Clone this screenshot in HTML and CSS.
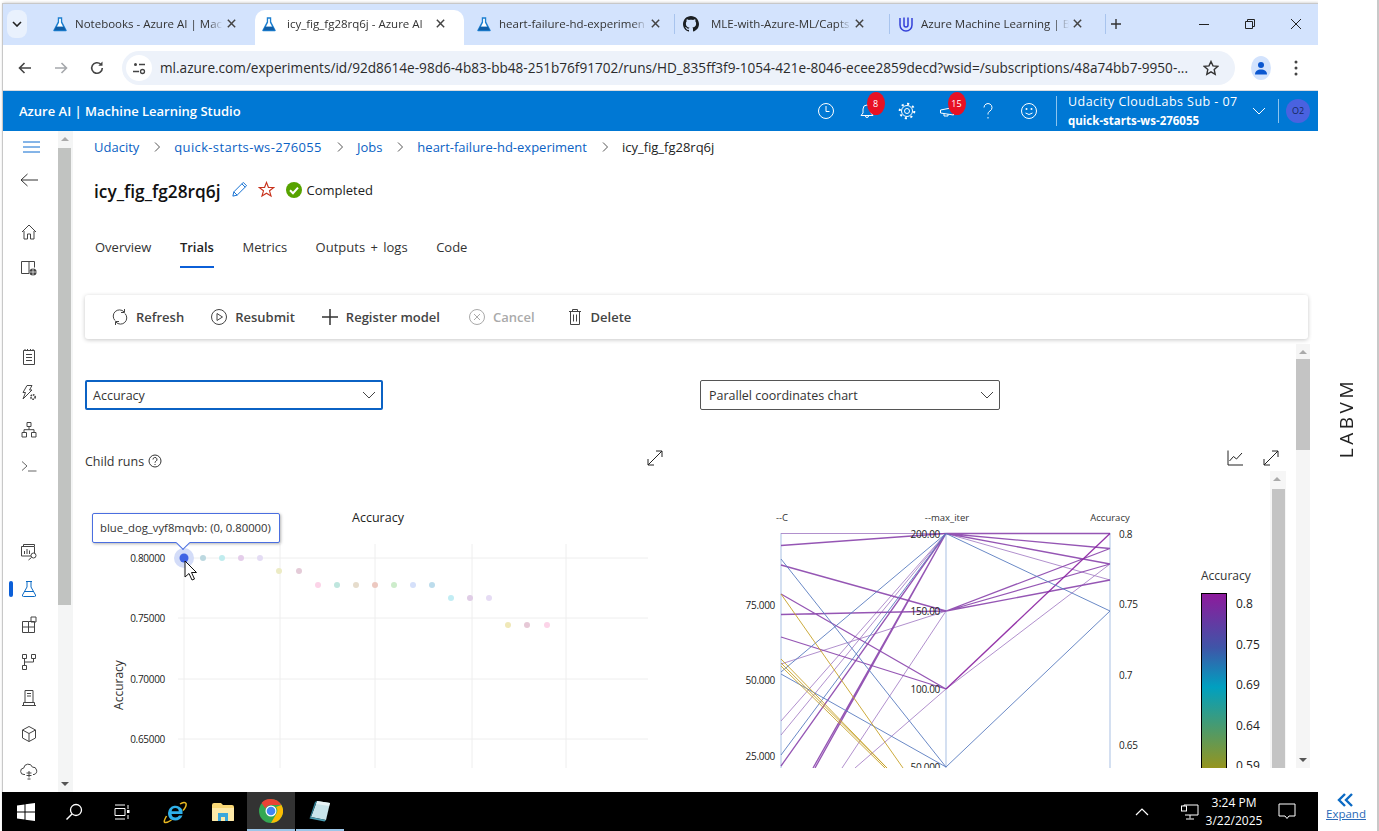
FILE: index.html
```html
<!DOCTYPE html>
<html lang="en">
<head>
  <meta charset="UTF-8" />
  <title>icy_fig_fg28rq6j - Azure AI</title>
  <link rel="stylesheet" href="styles.css">
</head>
<body>
  <svg class="defs" width="0" height="0">
    <symbol id="flask" viewBox="0 0 18 18">
      <path d="M6.5 1.5h5v5l5 9.5q.4 1.2-1 1.2H2.500q-1.400 0-1-1.200l5-9.500z" fill="#1c7fd0"/>
      <path d="M8 3h2v4.200L12.500 12h-7L8 7.200z" fill="#fff"/>
      <path d="M4.500 12h9l2 4h-13z" fill="#0f5ea8"/>
    </symbol>
    <symbol id="close" viewBox="0 0 12 12"><path d="M2 2l8 8M10 2l-8 8" stroke="#444" stroke-width="1.600" fill="none"/></symbol>
    <symbol id="chev" viewBox="0 0 12 12"><path d="M4 1.500L8.500 6 4 10.500" stroke="#555" fill="none"/></symbol>
    <symbol id="expand" viewBox="0 0 18 18"><path d="M2 16L16 2M10 2h6v6M2 10v6h6" stroke="#222" fill="none"/></symbol>
  </svg>

  <div class="desktop">
    <div class="tabstrip">
      <div class="tab-menu"><svg width="10" height="6" viewBox="0 0 10 6"><path d="M1 1l4 4 4-4" stroke="#222" stroke-width="1.600" fill="none"/></svg></div>
      <div class="tab"><svg class="favicon"><use href="#flask"/></svg><span class="tab-title">Notebooks - Azure AI | Mac</span><svg class="tab-x"><use href="#close"/></svg></div>
      <div class="tab active"><svg class="favicon"><use href="#flask"/></svg><span class="tab-title">icy_fig_fg28rq6j - Azure AI</span><svg class="tab-x"><use href="#close"/></svg></div>
      <div class="tab tab-gap"><svg class="favicon"><use href="#flask"/></svg><span class="tab-title">heart-failure-hd-experimen</span><svg class="tab-x"><use href="#close"/></svg></div>
      <div class="tab tab-back sep-left">
        <svg class="favicon" viewBox="0 0 16 16"><path fill="#1b1f23" d="M8 0C3.600 0 0 3.600 0 8c0 3.500 2.300 6.500 5.500 7.600.4.100.5-.2.500-.4v-1.400c-2.200.5-2.700-1.100-2.700-1.100-.4-.9-.9-1.200-.9-1.200-.7-.5.100-.5.100-.5.800.1 1.200.8 1.200.8.700 1.200 1.900.9 2.300.7.100-.5.300-.9.500-1.100-1.800-.2-3.600-.9-3.600-4 0-.9.300-1.600.8-2.100-.1-.2-.4-1 .1-2.100 0 0 .7-.2 2.200.8.600-.2 1.300-.3 2-.3s1.400.1 2 .3c1.500-1 2.200-.8 2.200-.8.400 1.100.2 1.900.1 2.100.5.600.8 1.300.8 2.100 0 3.100-1.900 3.700-3.700 3.900.3.300.6.800.6 1.500v2.200c0 .2.100.5.600.4C13.700 14.500 16 11.500 16 8c0-4.400-3.600-8-8-8z"/></svg>
        <span class="tab-title">MLE-with-Azure-ML/Capts</span><svg class="tab-x"><use href="#close"/></svg>
      </div>
      <div class="tab tab-gap sep-left sep-right">
        <svg class="favicon" viewBox="0 0 16 16"><path d="M2 2v7a6 6 0 0 0 12 0V2M6 1.500v7.500a2 2 0 0 0 4 0V1.500" stroke="#3340d8" stroke-width="1.500" fill="none"/></svg>
        <span class="tab-title">Azure Machine Learning | B</span><svg class="tab-x"><use href="#close"/></svg>
      </div>
      <div class="tab-plus"><svg width="12" height="12" viewBox="0 0 12 12"><path d="M6 1v10M1 6h10" stroke="#333" stroke-width="1.400"/></svg></div>
      <div class="window-btns">
        <svg width="12" height="12" viewBox="0 0 12 12"><path d="M1 6.500h10" stroke="#222"/></svg>
        <svg width="12" height="12" viewBox="0 0 12 12"><path d="M1.500 3.500h7v7h-7zM3.500 3.500v-2h7v7h-2" stroke="#222" fill="none"/></svg>
        <svg width="12" height="12" viewBox="0 0 12 12"><path d="M1 1l10 10M11 1L1 11" stroke="#222"/></svg>
      </div>
    </div>

    <div class="toolbar">
      <svg class="tool" viewBox="0 0 16 16"><path d="M14 8H2.500M7.500 3l-5 5 5 5" stroke="#444" stroke-width="1.600" fill="none"/></svg>
      <svg class="tool" viewBox="0 0 16 16"><path d="M2 8h11.500M8.500 3l5 5-5 5" stroke="#a5a8ac" stroke-width="1.600" fill="none"/></svg>
      <svg class="tool" viewBox="0 0 16 16"><path d="M13.300 8a5.300 5.300 0 1 1-1.600-3.800" stroke="#444" stroke-width="1.600" fill="none"/><path d="M13.500 1.500v4.200H9.300z" fill="#444"/></svg>
      <div class="omnibox">
        <span class="tune"><svg width="14" height="14" viewBox="0 0 14 14"><circle cx="3.500" cy="3.500" r="1.500" fill="#444"/><path d="M7 3.500h6M1 10.500h6" stroke="#444" stroke-width="1.300"/><circle cx="10.500" cy="10.500" r="2" stroke="#444" stroke-width="1.300" fill="none"/></svg></span>
        <span class="url">ml.azure.com/experiments/id/92d8614e-98d6-4b83-bb48-251b76f91702/runs/HD_835ff3f9-1054-421e-8046-ecee2859decd?wsid=/subscriptions/48a74bb7-9950-...</span>
        <svg class="star" viewBox="0 0 16 16"><path d="M8 1.500l2 4.400 4.700.5-3.500 3.200 1 4.700L8 11.900l-4.200 2.400 1-4.700L1.300 6.400 6 5.900z" stroke="#333" stroke-width="1.400" fill="none"/></svg>
      </div>
      <span class="profile"><svg width="14" height="14" viewBox="0 0 14 14"><circle cx="7" cy="4" r="3" fill="#0b57d0"/><path d="M1 13.500c0-3.500 2.500-5 6-5s6 1.500 6 5z" fill="#0b57d0"/></svg></span>
      <svg class="dots" width="4" height="16" viewBox="0 0 4 16"><circle cx="2" cy="2" r="1.500" fill="#444"/><circle cx="2" cy="8" r="1.500" fill="#444"/><circle cx="2" cy="14" r="1.500" fill="#444"/></svg>
    </div>

    <header class="appbar">
      <div class="app-title">Azure AI | Machine Learning Studio</div>
      <div class="app-icons">
        <svg class="app-icon" viewBox="0 0 18 18"><circle cx="9" cy="9" r="7.500" stroke="#fff" fill="none"/><path d="M9 4v5.500h3.500" stroke="#fff" fill="none"/></svg>
        <span class="app-icon-wrap"><svg class="app-icon" viewBox="0 0 18 18"><path d="M3 13.500h12l-2-2.500V7a4 4 0 0 0-8 0v4zM7.500 14a1.500 1.500 0 0 0 3 0" stroke="#fff" fill="none"/></svg><span class="badge">8</span></span>
        <svg class="app-icon" viewBox="0 0 18 18"><circle cx="9" cy="9" r="2.500" stroke="#fff" fill="none"/><circle cx="9" cy="9" r="5.500" stroke="#fff" fill="none"/><circle cx="9" cy="9" r="7.300" stroke="#fff" stroke-width="2" stroke-dasharray="2.200 3.500" fill="none"/></svg>
        <span class="app-icon-wrap"><svg class="app-icon" viewBox="0 0 18 18"><path d="M1.500 8v3l13 2V5.500zM5 11.500v2.500h4v-1.800" stroke="#fff" fill="none"/></svg><span class="badge">15</span></span>
        <svg class="app-icon" viewBox="0 0 18 18"><path d="M5 5.500a4 4 0 1 1 6 3.500c-1.500.9-2 1.700-2 3.500M9 15v1.500" stroke="#fff" fill="none"/></svg>
        <svg class="app-icon" viewBox="0 0 18 18"><circle cx="9" cy="9" r="7.500" stroke="#fff" fill="none"/><circle cx="6.500" cy="7" r="1" fill="#fff"/><circle cx="11.500" cy="7" r="1" fill="#fff"/><path d="M5.500 11q3.500 3 7 0" stroke="#fff" fill="none"/></svg>
      </div>
      <div class="account">
        <div class="account-sub">Udacity CloudLabs Sub - 07</div>
        <div class="account-ws">quick-starts-ws-276055</div>
      </div>
      <svg class="account-chev" width="14" height="8" viewBox="0 0 14 8"><path d="M1 1l6 6 6-6" stroke="#fff" fill="none"/></svg>
      <div class="avatar-box"><span class="avatar">O2</span></div>
    </header>

    <div class="studio">
      <nav class="sidenav">
        <svg class="nav-burger" width="17" height="12" viewBox="0 0 17 12"><path d="M0 1h17M0 6h17M0 11h17" stroke="#0b6ad0"/></svg>
        <svg class="nav-back" width="18" height="14" viewBox="0 0 18 14"><path d="M18 7H1M7.500 1L1 7l6.500 6" stroke="#333" fill="none"/></svg>
        <svg class="nav-icon" viewBox="0 0 18 18"><path d="M2 9l7-7 7 7M4 8v8h3.500v-5h3v5H14V8" stroke="#444" fill="none"/></svg>
        <svg class="nav-icon" viewBox="0 0 18 18"><path d="M9 14.500H1.500v-12h13v6M9 2.500v12" stroke="#444" fill="none"/><circle cx="13" cy="13" r="3.600" fill="#444"/><path d="M9.500 13h7M13 9.500v7" stroke="#fff" stroke-width=".7"/></svg>
        <div class="nav-gap-1"></div>
        <svg class="nav-icon" viewBox="0 0 18 18"><path d="M3.500 2.500h11v14h-11zM6 6.500h6M6 9.500h6M6 12.500h6M5 1v2M7.500 1v2M10.500 1v2M13 1v2" stroke="#444" fill="none"/></svg>
        <svg class="nav-icon" viewBox="0 0 18 18"><path d="M7 1.500h5L9.500 6H12L3 15l2.500-6.500H3z" stroke="#444" fill="none"/><circle cx="13" cy="13" r="2.200" stroke="#444" stroke-dasharray="1.500 .8" stroke-width="1.600" fill="none"/></svg>
        <svg class="nav-icon" viewBox="0 0 18 18"><path d="M7 1.500h4v4H7zM2 11.500h4.500V16H2zM11.500 11.500H16V16h-4.500zM9 5.500v3.200M4 11.500V8.700h10v2.800" stroke="#444" fill="none"/></svg>
        <svg class="nav-icon" viewBox="0 0 18 18"><path d="M2 4.500L7 9l-5 4.500" stroke="#666" fill="none"/><path d="M8 14h8.500" stroke="#999" stroke-width="1.500"/></svg>
        <div class="nav-gap-2"></div>
        <svg class="nav-icon" viewBox="0 0 18 18"><path d="M3.500 3V1.500h11V3M1.500 3.500h13V13h-13zM4.500 11V8M7 11V6M9.500 11V7.500" stroke="#444" fill="none"/><circle cx="13.500" cy="12.500" r="2.500" fill="#fff" stroke="#444"/><path d="M11.500 14.500L8.500 17" stroke="#444"/></svg>
        <div class="nav-active">
          <svg class="nav-icon" viewBox="0 0 18 18"><path d="M6 1.500h6M7 1.500v5.500L2.500 15q-.5 1.500 1 1.500h11q1.500 0 1-1.500L11 7V1.500M4.500 11.500h9" stroke="#0b6ac4" fill="none"/></svg>
        </div>
        <svg class="nav-icon" viewBox="0 0 18 18"><path d="M2.500 5.500h6v11h-6zM2.500 11h12v5.500h-6M8.500 5.500h6V11M11 1h5v5h-5z" stroke="#444" fill="none"/></svg>
        <svg class="nav-icon" viewBox="0 0 18 18"><path d="M2.500 1.500h4v4h-4zM11.500 1.500h4v4h-4zM2.500 12.500h4v4h-4zM4.500 5.500v7M13.500 5.500V9h-9" stroke="#444" fill="none"/></svg>
        <svg class="nav-icon" viewBox="0 0 18 18"><path d="M5 1.500h8v12H5zM7 4.500h4M7 7h4M2 16.500h14M3.500 16.500v-3H5M14.500 16.500v-3H13" stroke="#444" fill="none"/></svg>
        <svg class="nav-icon" viewBox="0 0 18 18"><path d="M9 1.500l6.500 3.500v8L9 16.500 2.500 13V5zM2.500 5L9 8.500 15.500 5M9 8.500v8" stroke="#444" fill="none"/></svg>
        <svg class="nav-icon" viewBox="0 0 18 18"><path d="M5 12.500H4a3.200 3.200 0 0 1-.3-6.400 4.500 4.500 0 0 1 8.700-1 3.800 3.800 0 0 1 1.600 7.400H13M6.500 11h5M6.500 13.500h5M9 9v6.500M7.500 17h3" stroke="#444" fill="none"/></svg>
      </nav>
      <div class="page-scroll">
        <span class="arrow-up"></span>
        <div class="page-thumb"></div>
        <span class="arrow-down"></span>
      </div>

      <main class="content">
        <div class="crumbs">
          <a>Udacity</a><svg class="crumb-sep"><use href="#chev"/></svg>
          <a class="crumb-wide">quick-starts-ws-276055</a><svg class="crumb-sep"><use href="#chev"/></svg>
          <a>Jobs</a><svg class="crumb-sep"><use href="#chev"/></svg>
          <a>heart-failure-hd-experiment</a><svg class="crumb-sep"><use href="#chev"/></svg>
          <span>icy_fig_fg28rq6j</span>
        </div>
        <div class="run-head">
          <h1>icy_fig_fg28rq6j</h1>
          <svg class="pencil" viewBox="0 0 18 18"><path d="M2 16l1-4.500L13 1.500l3.500 3.500L6.500 15zM3 11.500L6.500 15M11.500 3l3.500 3.500" stroke="#0b6ad0" fill="none"/></svg>
          <svg class="fav" viewBox="0 0 18 18"><path d="M9 1.500l2 5.200 5.700.2-4.500 3.500 1.600 5.500L9 13l-4.800 2.900 1.600-5.500-4.500-3.500 5.700-.2z" stroke="#c8321c" stroke-width="1.200" fill="none"/></svg>
          <svg class="status" viewBox="0 0 16 16"><circle cx="8" cy="8" r="8" fill="#57a300"/><path d="M4 8.200l3 3 5-5.500" stroke="#fff" stroke-width="2" fill="none"/></svg>
          <span class="status-text">Completed</span>
        </div>
        <div class="tabs">
          <span>Overview</span>
          <span class="tab-on">Trials</span>
          <span>Metrics</span>
          <span>Outputs + logs</span>
          <span>Code</span>
        </div>
        <div class="commands">
          <span class="cmd"><svg viewBox="0 0 18 18"><path d="M4 12.500A6 6 0 0 1 13 3.800M14 5.500a6 6 0 0 1-9 8.700" stroke="#444" fill="none"/><path d="M13.500 1v3.500H10M4.500 17v-3.500H8" stroke="#444" fill="none"/></svg>Refresh</span>
          <span class="cmd"><svg viewBox="0 0 18 18"><circle cx="9" cy="9" r="7.500" stroke="#444" fill="none"/><path d="M7 5.500l5.500 3.500L7 12.500z" stroke="#444" fill="none"/></svg>Resubmit</span>
          <span class="cmd"><svg viewBox="0 0 18 18"><path d="M9 1v16M1 9h16" stroke="#333" stroke-width="1.500"/></svg>Register model</span>
          <span class="cmd off"><svg viewBox="0 0 18 18"><circle cx="9" cy="9" r="7.500" stroke="#aaa" fill="none"/><path d="M6 6l6 6M12 6l-6 6" stroke="#aaa"/></svg>Cancel</span>
          <span class="cmd"><svg viewBox="0 0 18 18"><path d="M3 3.500h12M6.500 3.500V1.500h5v2M4.500 3.500v13h9v-13M7.500 6.500v7M10.500 6.500v7" stroke="#444" fill="none"/></svg>Delete</span>
        </div>

        <div class="scroll-area">
          <div class="scroll-content">
            <div class="selects">
              <div class="select focused">Accuracy<svg width="14" height="8" viewBox="0 0 14 8"><path d="M1 1l6 6 6-6" stroke="#444" fill="none"/></svg></div>
              <div class="select">Parallel coordinates chart<svg width="14" height="8" viewBox="0 0 14 8"><path d="M1 1l6 6 6-6" stroke="#444" fill="none"/></svg></div>
            </div>
            <div class="panels">
              <section class="panel-left">
                <div class="panel-head">
                  <span class="child-runs">Child runs <svg width="14" height="14" viewBox="0 0 14 14"><circle cx="7" cy="7" r="6" stroke="#333" fill="none"/><path d="M5 5.500a2 2 0 1 1 3 1.700c-.7.400-1 .8-1 1.500M7 10v1" stroke="#333" fill="none"/></svg></span>
                  <svg class="head-icon"><use href="#expand"/></svg>
                </div>
                <div class="chart-wrap">
                  <div class="tooltip">blue_dog_vyf8mqvb: (0, 0.80000)</div>
                  <svg class="chart" width="580" height="297" viewBox="85 471 580 297">
                    <g stroke="#eee">
                      <path d="M184 544v224M280 544v224M375 544v224M472 544v224M566 544v224"/>
                      <path d="M178 558h470M178 618h470M178 679h470M178 739h470"/>
                    </g>
                    <text class="title" x="378" y="522" text-anchor="middle">Accuracy</text>
                    <g class="ticks" text-anchor="end">
                      <text x="165" y="562">0.80000</text>
                      <text x="165" y="622">0.75000</text>
                      <text x="165" y="683">0.70000</text>
                      <text x="165" y="743">0.65000</text>
                    </g>
                    <text class="ylabel" transform="translate(123 685) rotate(-90)" text-anchor="middle">Accuracy</text>
                    <circle cx="184" cy="558" r="10" fill="#d3dcf8"/>
                    <g class="dots-faint">
                      <circle cx="203" cy="558" r="3" fill="#bcd8e0"/>
                      <circle cx="222" cy="558" r="3" fill="#c0ecee"/>
                      <circle cx="241" cy="558" r="3" fill="#e4cdea"/>
                      <circle cx="260" cy="558" r="3" fill="#e4dcf4"/>
                      <circle cx="279" cy="571" r="3" fill="#ecebc4"/>
                      <circle cx="299" cy="571" r="3" fill="#e4cbd8"/>
                      <circle cx="318" cy="585" r="3" fill="#fcd4e8"/>
                      <circle cx="337" cy="585" r="3" fill="#bfe6de"/>
                      <circle cx="356" cy="585" r="3" fill="#e6dccc"/>
                      <circle cx="375" cy="585" r="3" fill="#ecc8c0"/>
                      <circle cx="394" cy="585" r="3" fill="#cdeccb"/>
                      <circle cx="413" cy="585" r="3" fill="#d5e0fa"/>
                      <circle cx="432" cy="585" r="3" fill="#bcdcec"/>
                      <circle cx="451" cy="598" r="3" fill="#c2edf4"/>
                      <circle cx="470" cy="598" r="3" fill="#e0cde6"/>
                      <circle cx="489" cy="598" r="3" fill="#e6dcf4"/>
                      <circle cx="508" cy="625" r="3" fill="#f0e8b8"/>
                      <circle cx="527" cy="625" r="3" fill="#e6c8d6"/>
                      <circle cx="547" cy="625" r="3" fill="#fcd4e8"/>
                    </g>
                    <circle cx="184" cy="558" r="4.500" fill="#3f63e4"/>
                    <path d="M185 561v16l4-3.500 3 6.500 2.500-1-3-6.500h5z" fill="#fff" stroke="#111" stroke-width="1"/>
                  </svg>
                </div>
              </section>
              <section class="panel-right">
                <div class="panel-head right-head">
                  <svg class="head-icon" viewBox="0 0 18 18"><path d="M2 1.500V16h15M3.500 12L7.500 7.500l3 2.500L16 4" stroke="#222" fill="none"/></svg>
                  <svg class="head-icon"><use href="#expand"/></svg>
                </div>
                <div class="chart-body">
                  <svg class="chart" width="570" height="297" viewBox="700 471 570 297">
                    <g class="axis-names" text-anchor="middle">
                      <text x="782" y="521">--C</text>
                      <text x="947" y="521">--max_iter</text>
                      <text x="1110" y="521">Accuracy</text>
                    </g>
                    <g stroke="#b8cbe8" stroke-width="1.200">
                      <path d="M781 533v235M946 533v235M1110 533v235"/>
                    </g>
                    <g class="lines" fill="none" stroke-width="1" stroke-opacity=".9">
                      <g stroke="#a984c8">
                        <path d="M781 533.500L946 533.500"/>
                        <path d="M781 721L946 533.500M781 735L946 533.500M781 664L946 611M842 768L946 611M855 768L946 689"/>
                        <path d="M946 533.500L1110 580M946 689L1110 564"/>
                      </g>
                      <g stroke="#8a44ac" stroke-width="1.300">
                        <path d="M781 545.500L946 533.500M781 565L946 611M781 614.500L946 611M781 637L946 689M781 594L946 689"/>
                        <path d="M781 766L946 533.500M813 768L946 533.500M815 768L946 533.500"/>
                        <path d="M946 533.500L1110 533.500M946 533.500L1110 548.500M946 533.500L1110 564M946 611L1110 564M946 611L1110 548.500M946 611L1110 580"/>
                        <path d="M946 689L1110 533.500" stroke="#8a20a0"/>
                      </g>
                      <g stroke="#5a7cc0">
                        <path d="M781 559L946 767M781 672L946 533.500M781 674L946 767M781 755L946 533.500"/>
                        <path d="M946 533.500L1110 611M946 767L1110 611"/>
                      </g>
                      <g stroke="#c6a228">
                        <path d="M781 594L903 768M781 659L887 768M781 663L887 768M781 666L885 768"/>
                      </g>
                    </g>
                    <g class="ticks" text-anchor="end">
                      <text x="775" y="609">75.000</text>
                      <text x="775" y="684">50.000</text>
                      <text x="775" y="760">25.000</text>
                      <text x="940" y="538">200.00</text>
                      <text x="940" y="615">150.00</text>
                      <text x="940" y="693">100.00</text>
                      <text x="940" y="771">50.000</text>
                    </g>
                    <g class="ticks">
                      <text x="1119" y="538">0.8</text>
                      <text x="1119" y="608">0.75</text>
                      <text x="1119" y="679">0.7</text>
                      <text x="1119" y="749">0.65</text>
                    </g>
                    <text class="legend-title" x="1201" y="580">Accuracy</text>
                    <defs>
                      <linearGradient id="scale" x1="0" y1="0" x2="0" y2="1">
                        <stop offset="0" stop-color="#8e1a9c"/>
                        <stop offset=".3" stop-color="#3f55a8"/>
                        <stop offset=".52" stop-color="#00a0c0"/>
                        <stop offset=".76" stop-color="#4f9a68"/>
                        <stop offset="1" stop-color="#a09414"/>
                      </linearGradient>
                    </defs>
                    <rect x="1201.500" y="593.500" width="25" height="180" fill="url(#scale)" stroke="#000"/>
                    <g class="legend-ticks">
                      <text x="1236" y="608">0.8</text>
                      <text x="1236" y="649">0.75</text>
                      <text x="1236" y="689">0.69</text>
                      <text x="1236" y="730">0.64</text>
                      <text x="1236" y="770">0.59</text>
                    </g>
                  </svg>
                  <div class="chart-scroll"><span class="arrow-up"></span><div class="chart-thumb"></div></div>
                </div>
              </section>
            </div>
          </div>
          <div class="area-scroll">
            <span class="arrow-up"></span>
            <div class="area-thumb"></div>
            <span class="arrow-down"></span>
          </div>
        </div>
      </main>
    </div>

    <footer class="taskbar">
      <span class="task"><svg width="20" height="20" viewBox="0 0 20 20"><path fill="#fff" d="M1 3.500l7.500-1v7H1zM9.500 2.300L19 1v8.500H9.500zM1 10.500h7.500v7L1 16.500zM9.500 10.500H19V19l-9.500-1.300z"/></svg></span>
      <span class="task"><svg width="18" height="18" viewBox="0 0 18 18"><circle cx="11" cy="7" r="5.500" stroke="#fff" stroke-width="1.300" fill="none"/><path d="M7 11l-5.500 5.500" stroke="#fff" stroke-width="1.500"/></svg></span>
      <span class="task"><svg width="18" height="16" viewBox="0 0 18 16"><path d="M2 1h10M2 15h10M2 4.500h10v7H2zM15 1v4M15 11v4" stroke="#fff" fill="none"/><rect x="14" y="6" width="2.500" height="3" fill="#fff"/></svg></span>
      <span class="task task-ie"><svg width="24" height="24" viewBox="0 0 24 24"><path d="M5 13a7.500 7.500 0 0 1 14.500-2.500V14H8.500q.5 3.500 4 3.500 2.500 0 3.500-2h3.500c-1.500 3.500-4 5-7.200 5C7.500 20.500 5 17.500 5 13zm3.600-1.800h7.200c-.2-2-1.500-3.200-3.500-3.200s-3.300 1.200-3.700 3.200z" fill="#2fb0e8"/><path d="M17 4c3-2 5.500-2 6-.5s-.5 4-3 7M3.500 16c-2 3.500-3 6-1.500 6.500s4-.8 6.500-2.500" stroke="#e8b820" stroke-width="1.500" fill="none"/></svg></span>
      <span class="task"><svg width="24" height="20" viewBox="0 0 24 20"><path d="M1 3q0-2 2-2h7l2 2h9q2 0 2 2v13q0 1-1 1H2q-1 0-1-1z" fill="#f8d775"/><path d="M1 6h22v12q0 1-1 1H2q-1 0-1-1z" fill="#fde9a8"/><path d="M7 11h10v8h-3v-4h-4v4H7z" fill="#3aa7dc"/></svg></span>
      <span class="task task-on"><svg width="24" height="24" viewBox="0 0 24 24"><circle cx="12" cy="12" r="12" fill="#34a853"/><path d="M12 0a12 12 0 0 1 10.400 6H12a6 6 0 0 0-5.500 3.500L2.500 4A12 12 0 0 1 12 0z" fill="#ea4335"/><path d="M22.400 6A12 12 0 0 1 12 24l5.200-9A6 6 0 0 0 17 8z" fill="#fbbc04"/><circle cx="12" cy="12" r="5.500" fill="#fff"/><circle cx="12" cy="12" r="4.300" fill="#4285f4"/></svg></span>
      <span class="task task-open"><svg width="24" height="24" viewBox="0 0 24 24"><path d="M9 2l13 2-4 17L3 18z" fill="#c8e4ea"/><path d="M9 2l13 2-1 3L8 5z" fill="#e8f4f6"/><path d="M9 2L3 18l-1.500 1.500L7 3z" fill="#2e7f94"/><path d="M3 18l15 3-1.500 1.500L1.500 19.500z" fill="#4c9fb4"/></svg></span>
      <div class="tray">
        <svg class="tray-caret" width="14" height="8" viewBox="0 0 14 8"><path d="M1 7l6-6 6 6" stroke="#fff" stroke-width="1.200" fill="none"/></svg>
        <svg class="tray-net" width="18" height="16" viewBox="0 0 18 16"><path d="M3 4.500V1h14v10H4M9 11v3.500M5 15h8" stroke="#fff" fill="none"/><rect x=".5" y="2" width="5" height="5" stroke="#fff" fill="#000"/></svg>
        <div class="clock"><div>3:24 PM</div><div>3/22/2025</div></div>
        <svg class="tray-note" width="18" height="17" viewBox="0 0 18 17"><path d="M1 1h16v12h-6l-2 2.500L7 13H1z" stroke="#fff" fill="none"/></svg>
      </div>
    </footer>
  </div>

  <aside class="labvm">
    <div class="labvm-name">LABVM</div>
    <div class="labvm-expand">
      <svg width="18" height="14" viewBox="0 0 18 14"><path d="M8 1L2 7l6 6M15 1L9 7l6 6" stroke="#0b6ac4" stroke-width="2.400" fill="none"/></svg>
      <a>Expand</a>
    </div>
  </aside>
</body>
</html>
```

FILE: styles.css
```css
* {
  box-sizing: border-box;
}

html, body {
  margin: 0;
  height: 100%;
  overflow: hidden;
}

body {
  width: 1379px;
  height: 831px;
  display: flex;
  font-family: "Open Sans", "Noto Sans", sans-serif;
  background: #fff;
  color: #222;
}

svg {
  display: block;
  flex: none;
}

.defs {
  position: absolute;
}

.desktop {
  width: 1316px;
  height: 828px;
  margin: 3px 0 0 2px;
  border-top: 1px solid #c8c8c8;
  border-left: 1px solid #c8c8c8;
  display: flex;
  flex-direction: column;
  box-shadow: 1px 0 3px rgba(0, 0, 0, 0.25);
  flex: none;
}

/* browser chrome */
.tabstrip {
  height: 41px;
  background: #d3e3fd;
  display: flex;
  align-items: flex-start;
  padding-left: 4px;
  flex: none;
}

.tab-menu {
  width: 20px;
  height: 28px;
  margin-top: 6px;
  margin-right: 19px;
  background: #e9f1fd;
  border-radius: 8px;
  display: flex;
  align-items: center;
  justify-content: center;
}

.tab {
  width: 209px;
  height: 27px;
  margin-top: 6px;
  padding-left: 6px;
  display: flex;
  align-items: center;
  font-size: 11.500px;
  color: #333;
  position: relative;
}

.tab.active {
  height: 35px;
  padding-bottom: 8px;
  background: #fff;
  border-radius: 10px 10px 0 0;
}

.tab.active .tab-title {
  width: 148px;
  margin-left: 10px;
  margin-right: 0;
}

.tab.active .tab-x {
  margin-left: 0;
}

.tab-gap {
  margin-left: 6px;
}

.tab-back {
  margin-left: -2px;
}

.tab-back .tab-title {
  margin-left: 12px;
  width: 140px;
}

.sep-left::before, .sep-right::after {
  content: "";
  position: absolute;
  top: 4px;
  width: 1px;
  height: 20px;
  background: #a8c4ee;
}

.sep-left::before {
  left: -3px;
}

.sep-right::after {
  right: -5px;
}

.favicon {
  width: 16px;
  height: 16px;
}

.tab-title {
  width: 148px;
  margin-left: 7px;
  white-space: nowrap;
  overflow: hidden;
  -webkit-mask-image: linear-gradient(90deg, #000 90%, transparent);
  mask-image: linear-gradient(90deg, #000 90%, transparent);
}

.tab-x {
  width: 11px;
  height: 11px;
  margin-left: 3px;
}

.tab-plus {
  margin: 14px 0 0 9px;
}

.window-btns {
  margin-left: auto;
  padding: 14px 16px 0 0;
  display: flex;
  gap: 34px;
}

.toolbar {
  height: 46px;
  flex: none;
  background: #fff;
  border-radius: 0 10px 0 0;
  display: flex;
  align-items: center;
  padding-left: 14px;
  border-bottom: 1px solid #dadce0;
}

.tool {
  width: 16px;
  height: 16px;
  margin-right: 20px;
}

.omnibox {
  width: 1113px;
  height: 34px;
  margin-left: -3px;
  background: #edf2fa;
  border-radius: 17px;
  display: flex;
  align-items: center;
  padding-left: 4px;
}

.tune {
  width: 26px;
  height: 26px;
  border-radius: 50%;
  background: #fff;
  display: flex;
  align-items: center;
  justify-content: center;
}

.url {
  margin-left: 8px;
  font-size: 13.600px;
  color: #2b2b2b;
  white-space: nowrap;
  width: 1043px;
}

.star {
  width: 16px;
  height: 16px;
}

.profile {
  width: 20px;
  height: 24px;
  margin-left: 16px;
  border-radius: 50%;
  background: #d3e3fd;
  display: flex;
  align-items: center;
  justify-content: center;
}

.dots {
  margin-left: 23px;
}

.appbar {
  height: 40px;
  flex: none;
  background: #0078d4;
  color: #fff;
  display: flex;
  align-items: center;
  padding-left: 16px;
}

.app-title {
  font-size: 13px;
  font-weight: 600;
  width: 798px;
}

.app-icons {
  display: flex;
  gap: 22.500px;
  align-items: center;
  width: 239px;
}

.app-icon {
  width: 18px;
  height: 18px;
}

.app-icon-wrap {
  position: relative;
}

.badge {
  position: absolute;
  left: 9px;
  top: -10px;
  width: 18px;
  height: 23px;
  border-radius: 50%;
  background: #e81123;
  font-size: 9px;
  line-height: 23px;
  text-align: center;
}

.account {
  width: 190px;
  padding-left: 11px;
  border-left: 1px solid #8cc4ee;
  height: 30px;
  display: flex;
  flex-direction: column;
  justify-content: center;
}

.account-sub {
  font-size: 12.500px;
  letter-spacing: 0.45px;
  line-height: 19px;
  white-space: nowrap;
}

.account-ws {
  font-size: 11.500px;
  font-weight: 700;
  line-height: 19px;
  white-space: nowrap;
}

.account-chev {
  margin-left: 6px;
}

.avatar-box {
  margin-left: 12px;
  padding-left: 7px;
  border-left: 1px solid #8cc4ee;
  height: 24px;
  display: flex;
  align-items: center;
}

.avatar {
  width: 24px;
  height: 24px;
  border-radius: 50%;
  background: #4a62e0;
  color: #14285c;
  font-size: 9px;
  line-height: 24px;
  text-align: center;
}

/* studio */
.studio {
  flex: 1;
  display: flex;
  background: #fff;
  min-height: 0;
  overflow: hidden;
}

.sidenav {
  width: 55px;
  flex: none;
  background: #fff;
  display: flex;
  flex-direction: column;
  align-items: center;
  padding-right: 4px;
  padding-top: 10px;
}

.nav-burger {
  margin-bottom: 20px;
  margin-left: 5px;
}

.nav-back {
  margin-bottom: 36px;
}

.nav-icon {
  width: 18px;
  height: 18px;
  margin-bottom: 18.400px;
}

.nav-gap-1 {
  height: 52px;
  flex: none;
}

.nav-gap-2 {
  height: 50px;
  flex: none;
}

.nav-active {
  position: relative;
}

.nav-active::before {
  content: "";
  position: absolute;
  left: -11px;
  top: 1px;
  width: 4px;
  height: 16px;
  border-radius: 2px;
  background: #0b5fd8;
}

.page-scroll {
  width: 15px;
  background: #f4f5f5;
  position: relative;
  padding-top: 17px;
  flex: none;
}

.page-thumb {
  height: 457px;
  width: 13px;
  background: #c1c3c1;
}

.arrow-up, .arrow-down {
  position: absolute;
  left: 3px;
  width: 0;
  height: 0;
  border-left: 4px solid transparent;
  border-right: 4px solid transparent;
}

.arrow-up {
  top: 6px;
  border-bottom: 4px solid #aaa;
}

.arrow-down {
  bottom: 6px;
  border-top: 4px solid #555;
}

.content {
  flex: 1;
  min-width: 0;
}

.crumbs {
  height: 32px;
  padding-left: 21px;
  display: flex;
  align-items: center;
  font-size: 13px;
  color: #222;
  white-space: nowrap;
}

.crumbs a {
  color: #0b62c4;
}

.crumbs .crumb-wide {
  letter-spacing: 0.35px;
}

.crumb-sep {
  width: 12px;
  height: 12px;
  margin: 0 11px 0 12px;
}

.run-head {
  height: 57px;
  padding-left: 21px;
  display: flex;
  align-items: center;
}

.run-head h1 {
  margin: 0;
  font-size: 17.300px;
  font-weight: 600;
  color: #111;
}

.pencil {
  width: 17px;
  height: 17px;
  margin-left: 10px;
  margin-top: -4px;
}

.fav {
  width: 17px;
  height: 17px;
  margin-left: 10px;
  margin-top: -4px;
}

.status {
  width: 16px;
  height: 16px;
  margin-left: 11px;
  margin-top: -4px;
}

.status-text {
  margin-left: 5px;
  margin-top: -3px;
  font-size: 13px;
}

.tabs {
  height: 39px;
  margin-top: 15px;
  padding-left: 22px;
  display: flex;
  gap: 28.500px;
  font-size: 13px;
  word-spacing: 2px;
  color: #333;
}

.tabs span {
  height: 33px;
  line-height: 24px;
}

.tabs .tab-on {
  font-weight: 600;
  color: #222;
  border-bottom: 2px solid #0b5fd8;
}

.commands {
  width: 1223px;
  height: 44px;
  margin: 21px 0 0 12px;
  border-radius: 3px;
  background: #fff;
  box-shadow: 0 1px 4px rgba(0, 0, 0, 0.22);
  display: flex;
  align-items: center;
  gap: 26px;
  padding-left: 26px;
}

.cmd {
  display: flex;
  align-items: center;
  gap: 7px;
  font-size: 13px;
  font-weight: 600;
  color: #444;
}

.cmd svg {
  width: 18px;
  height: 18px;
}

.cmd.off {
  color: #aaa;
  margin-left: 2px;
  margin-right: 5px;
}

.scroll-area {
  height: 424px;
  margin-top: 5px;
  display: flex;
}

.scroll-content {
  width: 1223px;
  padding: 36px 0 0 12px;
  overflow: hidden;
}

.selects {
  display: flex;
  gap: 317px;
  margin-bottom: 39px;
}

.select {
  width: 298px;
  height: 30px;
  padding: 0 5px 0 8px;
  border: 1px solid #555;
  border-radius: 2px;
  font-size: 12.500px;
  display: flex;
  align-items: center;
  justify-content: space-between;
  color: #333;
}

.select:last-child {
  width: 300px;
}

.select.focused {
  border: 2px solid #0b62c4;
  padding-left: 6px;
  padding-right: 5px;
}

.panels {
  display: flex;
}

.panel-left {
  width: 615px;
  flex: none;
}

.panel-right {
  width: 596px;
  flex: none;
}

.panel-head {
  height: 22px;
  display: flex;
  align-items: center;
  justify-content: space-between;
}

.panel-left .panel-head {
  width: 579px;
}

.right-head {
  justify-content: flex-end;
  gap: 18px;
  padding-right: 16px;
}

.child-runs {
  display: flex;
  align-items: center;
  gap: 4px;
  font-size: 12.500px;
  color: #333;
  margin-top: 2px;
}

.head-icon {
  width: 18px;
  height: 18px;
  margin-top: -4px;
}

.chart-wrap {
  position: relative;
}

.chart {
  font-family: "Open Sans", "Noto Sans", sans-serif;
}

.tooltip {
  position: absolute;
  left: 7px;
  top: 42px;
  width: 188px;
  height: 30px;
  z-index: 2;
  background: #fff;
  border: 1px solid #4a6ee0;
  border-radius: 2px;
  box-shadow: 1px 1px 3px rgba(0, 0, 0, 0.3);
  font-size: 11.300px;
  line-height: 27px;
  padding-left: 7px;
  white-space: nowrap;
  color: #333;
}

.tooltip::after {
  content: "";
  position: absolute;
  left: 85px;
  bottom: -6px;
  width: 9px;
  height: 9px;
  background: #fff;
  border-right: 1px solid #4a6ee0;
  border-bottom: 1px solid #4a6ee0;
  transform: rotate(45deg);
}

.title {
  font-size: 12.500px;
  fill: #222;
}

.ticks {
  font-size: 10px;
  fill: #222;
  letter-spacing: -0.3px;
}

.ylabel {
  font-size: 12px;
  fill: #333;
}

.axis-names {
  font-size: 9.500px;
  fill: #333;
}

.legend-title {
  font-size: 12px;
  fill: #333;
}

.legend-ticks {
  font-size: 12px;
  fill: #222;
}

.chart-body {
  display: flex;
}

.chart-scroll {
  width: 16px;
  height: 297px;
  background: #f6f6f6;
  position: relative;
  padding: 18px 1px 0 2px;
}

.chart-thumb {
  height: 279px;
  background: #c4c4c4;
}

.area-scroll {
  width: 14px;
  background: #f5f5f5;
  position: relative;
  padding-top: 15px;
  flex: none;
}

.area-thumb {
  height: 91px;
  background: #c4c4c4;
}

/* windows taskbar */
.taskbar {
  height: 39px;
  flex: none;
  margin-left: -1px;
  background: #000;
  color: #fff;
  display: flex;
  align-items: center;
}

.task {
  width: 48px;
  height: 39px;
  display: flex;
  align-items: center;
  justify-content: center;
}

.task-ie {
  margin-left: 5px;
}

.task-on {
  background: #333;
  border-bottom: 2px solid #9cc6e8;
}

.task-open {
  border-bottom: 2px solid #9cc6e8;
  margin-left: 1px;
}

.tray {
  margin-left: auto;
  display: flex;
  align-items: center;
}

.tray-net {
  margin-left: 32px;
}

.clock {
  width: 80px;
  margin: 0 4px 0 -5px;
  font-size: 12px;
  line-height: 18px;
  text-align: center;
}

.tray-note {
  margin: 0 22px 0 0;
}

/* side panel */
.labvm {
  width: 61px;
  height: 831px;
  background: #fff;
  border-right: 2px solid #c8c8c8;
  display: flex;
  flex-direction: column;
  align-items: center;
  padding-right: 3px;
  flex: none;
}

.labvm-name {
  margin-top: 378px;
  writing-mode: vertical-rl;
  transform: rotate(180deg);
  font-size: 19px;
  letter-spacing: 3.500px;
  color: #222;
}

.labvm-expand {
  margin-top: auto;
  padding-bottom: 10px;
  display: flex;
  flex-direction: column;
  align-items: center;
  font-size: 11.500px;
}

.labvm-expand a {
  color: #2a6ab8;
  text-decoration: underline;
  line-height: 14px;
}
```
